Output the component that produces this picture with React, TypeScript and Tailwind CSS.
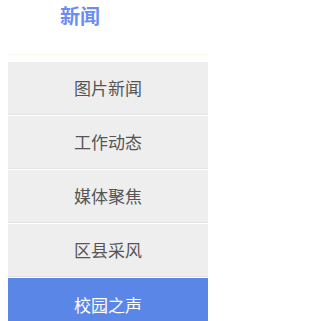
const items = ["图片新闻", "工作动态", "媒体聚焦", "区县采风", "校园之声"];

export default function App() {
  return (
    <div className="w-[220px] h-[321px] overflow-hidden bg-white font-['Microsoft_YaHei','Noto_Sans_CJK_SC',sans-serif]">
      {/* TITLE */}
      <div className="h-[54px] pl-[60px] pt-[2px]">
        <h2 className="text-[20px] leading-[28px] font-bold text-[#6b8cf5]">新闻</h2>
      </div>
      <div className="ml-[8px] w-[200px] h-px bg-[#fbf9ee]" />

      {/* MENU */}
      <ul className="ml-[8px] w-[200px] mt-[7px] flex flex-col gap-px">
        {items.map((t, i) => (
          <li
            key={t}
            className={
              i === items.length - 1
                ? "h-[53px] flex items-center justify-center bg-[#5a86e8] text-white text-[17px]"
                : "h-[53px] flex items-center justify-center bg-[#eeeeee] border-b border-[#e3e3e3] text-[#555555] text-[17px]"
            }
          >
            {t}
          </li>
        ))}
      </ul>
    </div>
  );
}
